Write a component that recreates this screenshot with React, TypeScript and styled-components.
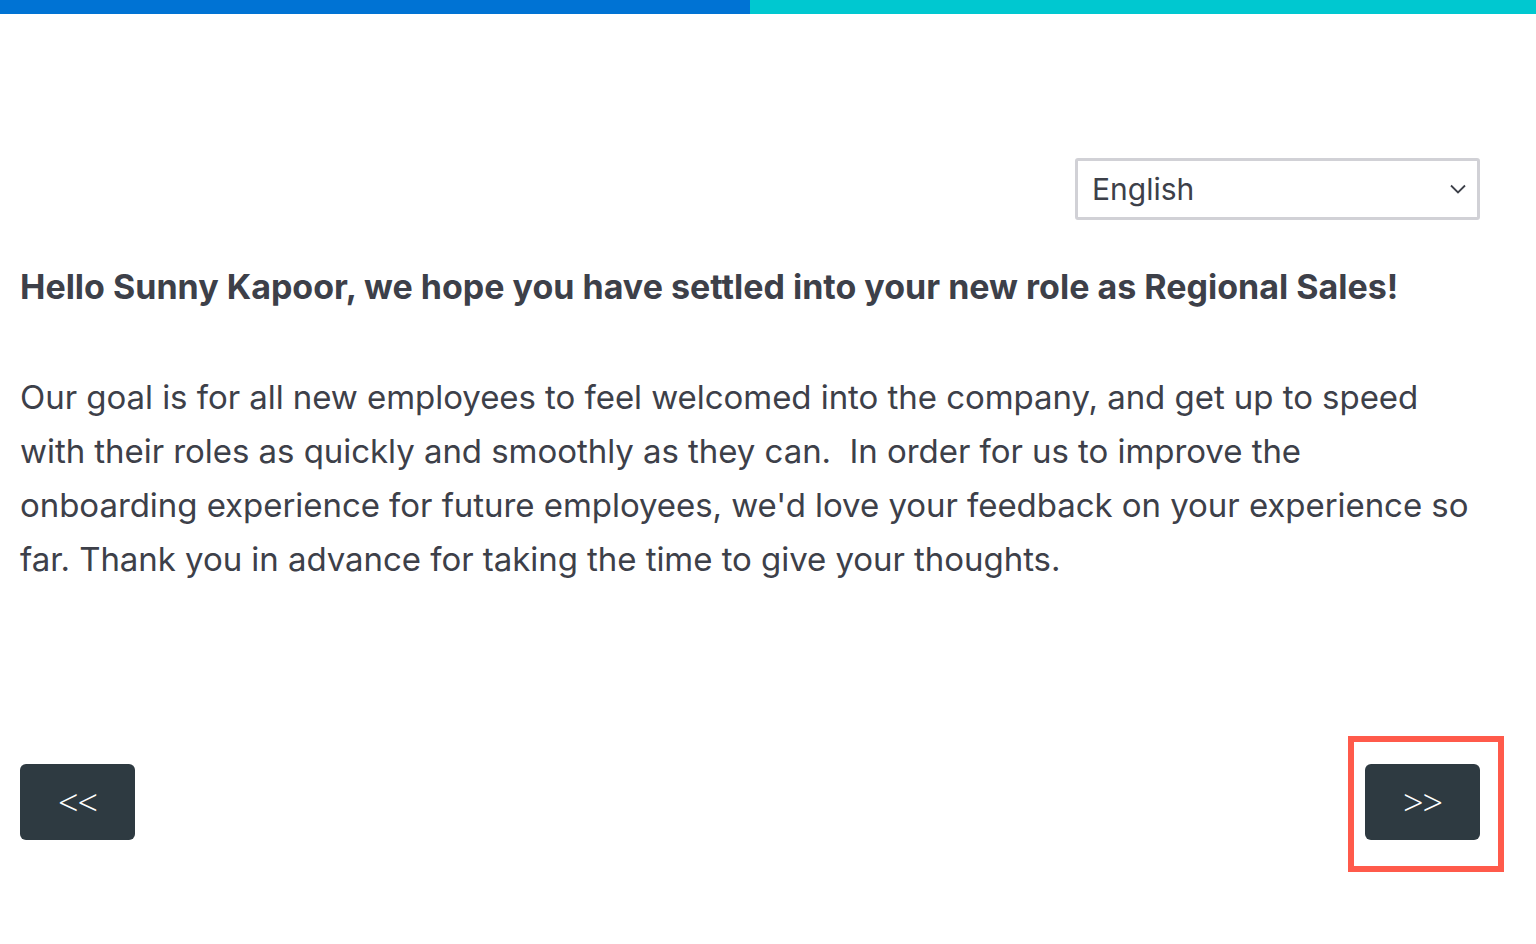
import React from "react";
import styled, { createGlobalStyle } from "styled-components";

const GlobalStyle = createGlobalStyle`
  html, body { margin: 0; padding: 0; background: #ffffff; }
  body { font-family: Inter, Roboto, "Liberation Sans", sans-serif; color: #3d4049; }
  * { box-sizing: border-box; }
`;

const Page = styled.div`
  min-height: 944px;
  display: flex;
  flex-direction: column;
`;

const Progress = styled.div`
  display: flex;
  height: 14px;
  background: #00c8d0;
`;

const ProgressFill = styled.div<{ $pct: number }>`
  width: ${(p) => p.$pct}%;
  background: #0073d4;
`;

const Content = styled.main`
  display: flex;
  flex-direction: column;
  padding: 144px 56px 0 20px;
`;

const LangRow = styled.div`
  display: flex;
  justify-content: flex-end;
`;

const LangSelect = styled.div`
  width: 405px;
  height: 62px;
  border: 3px solid #d1d1d6;
  border-radius: 3px;
  display: flex;
  align-items: center;
  justify-content: space-between;
  padding: 0 10px 0 14px;
  font-size: 30px;
  color: #3d4049;
  background: #fff;
`;

const Heading = styled.h1`
  margin: 47px 0 0;
  font-size: 34px;
  line-height: 40px;
  font-weight: 700;
  color: #3d4049;
  letter-spacing: 0;
`;

const Body = styled.p`
  margin: 63px 0 0;
  font-size: 33px;
  line-height: 54px;
  font-weight: 400;
  color: #3d4049;
  white-space: pre-wrap;
  letter-spacing: -0.05px;
`;

const NavRow = styled.div`
  display: flex;
  justify-content: space-between;
  margin-top: 178px;
`;

const NavButton = styled.button`
  position: relative;
  width: 115px;
  height: 76px;
  border: none;
  border-radius: 6px;
  background: #2e3a41;
  color: #ffffff;
  font-family: "Open Sans", Roboto, "Liberation Sans", sans-serif;
  font-size: 36px;
  font-weight: 300;
  letter-spacing: -1px;
  display: flex;
  align-items: center;
  justify-content: center;
  padding: 0;
  cursor: pointer;
`;

const Highlight = styled.span`
  position: absolute;
  left: -17px;
  top: -28px;
  right: -24px;
  bottom: -32px;
  border: 6px solid #ff5a4b;
  pointer-events: none;
`;

const Chevron = () => (
  <svg width="18" height="12" viewBox="0 0 18 12" fill="none">
    <path d="M2 2.5 L9 9.5 L16 2.5" stroke="#3d4049" strokeWidth="1.8" />
  </svg>
);

export default function App() {
  return (
    <Page>
      <GlobalStyle />
      <Progress>
        <ProgressFill $pct={48.83} />
      </Progress>
      <Content>
        <LangRow>
          <LangSelect>
            <span>English</span>
            <Chevron />
          </LangSelect>
        </LangRow>
        <Heading>
          Hello Sunny Kapoor, we hope you have settled into your new role as Regional Sales!
        </Heading>
        <Body>
          {"Our goal is for all new employees to feel welcomed into the company, and get up to speed with their roles as quickly and smoothly as they can.  In order for us to improve the onboarding experience for future employees, we'd love your feedback on your experience so far. Thank you in advance for taking the time to give your thoughts."}
        </Body>
        <NavRow>
          <NavButton>{"<<"}</NavButton>
          <NavButton>
            {">>"}
            <Highlight />
          </NavButton>
        </NavRow>
      </Content>
    </Page>
  );
}
